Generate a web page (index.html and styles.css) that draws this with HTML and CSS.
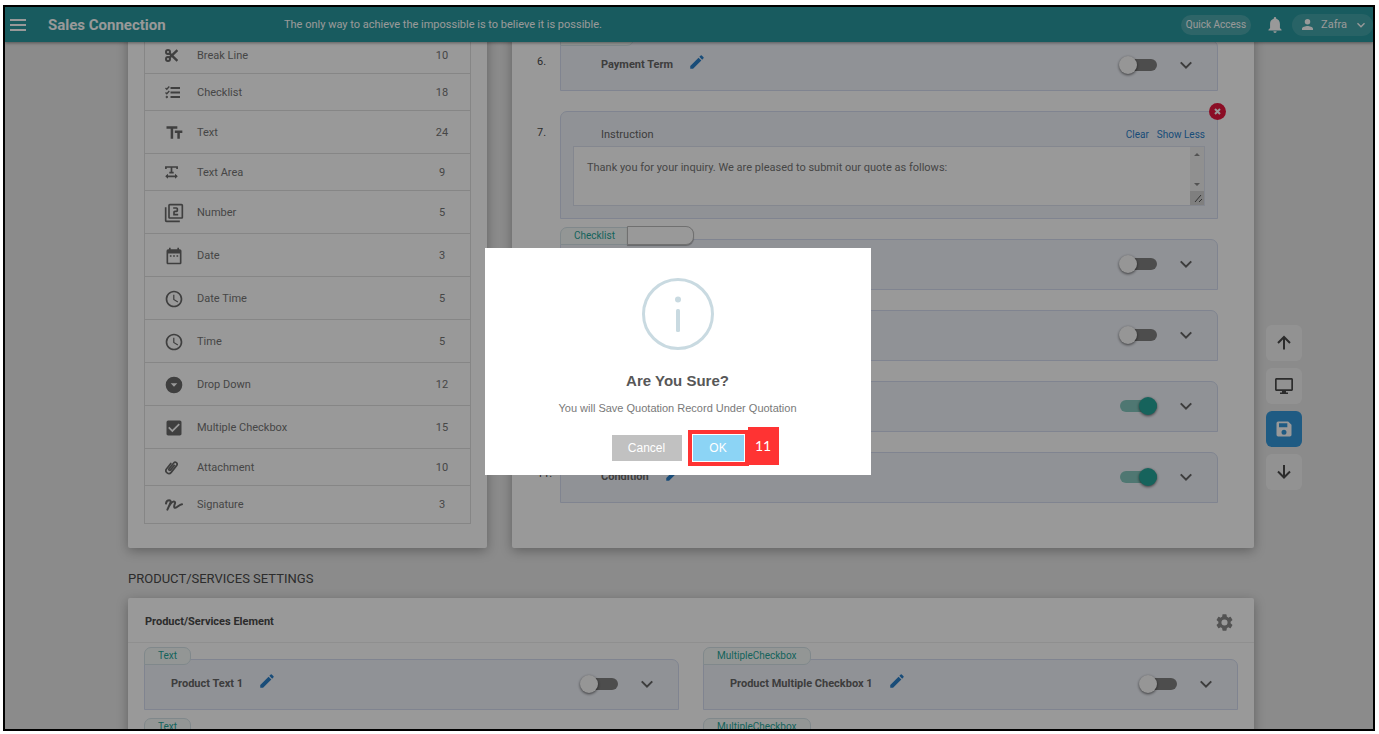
FILE: index.html
```html
<!DOCTYPE html>
<html lang="en">
<head>
<meta charset="utf-8">
<title>Sales Connection</title>
<link rel="stylesheet" href="styles.css">
</head>
<body>
<svg class="sprite" aria-hidden="true">
  <symbol id="pencil" viewBox="0 0 24 24"><path d="M3 17.25V21h3.75L17.81 9.94l-3.75-3.75L3 17.25zM20.71 7.04a1 1 0 0 0 0-1.41l-2.34-2.34a1 1 0 0 0-1.41 0l-1.83 1.83 3.75 3.75 1.83-1.83z"/></symbol>
  <symbol id="chevron" viewBox="0 0 24 24"><path d="M5 8.500l7 7 7-7" fill="none" stroke="currentColor" stroke-width="2.800"/></symbol>
  <symbol id="clock" viewBox="0 0 24 24"><path d="M11.99 2C6.47 2 2 6.48 2 12s4.47 10 9.99 10C17.52 22 22 17.52 22 12S17.52 2 11.99 2zM12 20a8 8 0 1 1 0-16 8 8 0 0 1 0 16zm.5-13H11v6l5.25 3.15.75-1.23-4.5-2.67z"/></symbol>
</svg>
<div class="frame">
  <header class="topbar">
    <button class="menu" aria-label="Menu"><svg viewBox="0 0 16 12"><path d="M0 1h16M0 6h16M0 11h16" stroke="currentColor" stroke-width="2"/></svg></button>
    <h1 class="brand">Sales Connection</h1>
    <p class="motto">The only way to achieve the impossible is to believe it is possible.</p>
    <button class="quick">Quick Access</button>
    <button class="bell" aria-label="Notifications"><svg viewBox="4 2.5 16 19.500"><path d="M12 22c1.100 0 2-.9 2-2h-4a2 2 0 0 0 2 2zm6-6v-5c0-3.070-1.640-5.640-4.500-6.320V4a1.500 1.500 0 0 0-3 0v.680C7.630 5.360 6 7.920 6 11v5l-2 2v1h16v-1z"/></svg></button>
    <button class="user"><svg class="person" viewBox="4 4 16 16"><path d="M12 12a4 4 0 1 0 0-8 4 4 0 0 0 0 8zm0 2c-2.670 0-8 1.340-8 4v2h16v-2c0-2.660-5.330-4-8-4z"/></svg><span>Zafra</span><svg class="caret" viewBox="0 0 24 24"><use href="#chevron"/></svg></button>
  </header>

  <main class="page">
    <div class="board">
      <section class="card palette">
        <ul class="elements">
          <li class="short"><span class="slot"><svg class="small" viewBox="0 0 13 13" fill="none" stroke="currentColor" stroke-width="2"><circle cx="3" cy="3" r="2"/><circle cx="3" cy="10" r="2"/><path d="M4.300 8.800 12.400 1.200M4.300 4.200l8.100 7.600" stroke-width="2.400"/></svg></span><span class="name">Break Line</span><span class="count">10</span></li>
          <li class="short"><span class="slot"><svg class="medium" viewBox="0 0 15 13" fill="none" stroke="currentColor"><path d="M5.500 2H15M5.500 6.500H15M5.500 11H15" stroke-width="1.800"/><path d="M.5 2l1.300 1.200L4.300.6M.5 6.500l1.300 1.200 2.500-2.600" stroke-width="1.400"/><circle cx="1.800" cy="11" r=".8" fill="currentColor"/></svg></span><span class="name">Checklist</span><span class="count">18</span></li>
          <li><span class="slot"><svg viewBox="0 0 24 24"><path d="M3 4v3h5v12h3V7h5V4H3zm19 5h-9v3h3v7h3v-7h3V9z"/></svg></span><span class="name">Text</span><span class="count">24</span></li>
          <li class="short"><span class="slot"><svg class="small" viewBox="0 0 13 13" fill="none" stroke="currentColor" stroke-width="1.700"><path d="M.9 3V1h11.200v2M6.500 1v5.500M4.300 6.700h4.400M1.500 10.300h10"/><path d="M3 7.800.2 10.300 3 12.800zM10 7.800l2.800 2.500-2.800 2.500z" fill="currentColor" stroke="none"/></svg></span><span class="name">Text Area</span><span class="count">9</span></li>
          <li><span class="slot"><svg viewBox="0 0 24 24"><path d="M3 5H1v16c0 1.100.9 2 2 2h16v-2H3V5zm18-4H7c-1.100 0-2 .9-2 2v14c0 1.100.9 2 2 2h14c1.100 0 2-.9 2-2V3c0-1.100-.9-2-2-2zm0 16H7V3h14v14zm-4-4h-4v-2h2c1.100 0 2-.9 2-2V7c0-1.100-.9-2-2-2h-4v2h4v2h-2c-1.100 0-2 .9-2 2v4h6v-2z"/></svg></span><span class="name">Number</span><span class="count">5</span></li>
          <li><span class="slot"><svg viewBox="0 0 24 24"><path d="M9 11H7v2h2v-2zm4 0h-2v2h2v-2zm4 0h-2v2h2v-2zm2-7h-1V2h-2v2H8V2H6v2H5a2 2 0 0 0-2 2v14c0 1.100.9 2 2 2h14c1.100 0 2-.9 2-2V6c0-1.100-.9-2-2-2zm0 16H5V9h14v11z"/></svg></span><span class="name">Date</span><span class="count">3</span></li>
          <li><span class="slot"><svg><use href="#clock"/></svg></span><span class="name">Date Time</span><span class="count">5</span></li>
          <li><span class="slot"><svg><use href="#clock"/></svg></span><span class="name">Time</span><span class="count">5</span></li>
          <li><span class="slot"><svg viewBox="0 0 24 24"><path d="M12 2a10 10 0 1 0 0 20 10 10 0 0 0 0-20zm0 12-4-4h8z"/></svg></span><span class="name">Drop Down</span><span class="count">12</span></li>
          <li><span class="slot"><svg viewBox="0 0 24 24"><path d="M19 3H5a2 2 0 0 0-2 2v14c0 1.100.9 2 2 2h14c1.100 0 2-.9 2-2V5c0-1.100-.9-2-2-2zm-9 14-5-5 1.410-1.410L10 14.170l7.590-7.590L19 8z"/></svg></span><span class="name">Multiple Checkbox</span><span class="count">15</span></li>
          <li class="short"><span class="slot"><svg class="clip" viewBox="0 0 13 15" fill="none" stroke="currentColor" stroke-width="1.700" stroke-linecap="round"><path d="M9.300 5.300 5.600 9.900c-.9 1-2.300-.1-1.500-1.200l4.600-5.700c1.600-1.900 4.500.3 3 2.400l-5.500 7C3.800 15.300-.7 12 1.500 8.900L5.800 3.500"/></svg></span><span class="name">Attachment</span><span class="count">10</span></li>
          <li class="short"><span class="slot"><svg class="sign" viewBox="0 0 18 12" fill="none" stroke="currentColor" stroke-width="2" stroke-linecap="round" stroke-linejoin="round"><path d="M1 4.500C1.300 2.300 3 1.200 4.300 1.200c1.700 0 1.500 1.700.9 3.300L2.400 10.600C4 7 6.500 2.800 8.700 2.600c1.800-.1 1.500 1.400 1 2.600-.6 1.600-1 3.700.6 3.600C12.300 8.700 14 5.600 17 5.200"/></svg></span><span class="name">Signature</span><span class="count">3</span></li>
        </ul>
      </section>

      <section class="card fields">
        <div class="line">
          <span class="no">6.</span>
          <div class="box"><span class="tag stub"></span><span class="title">Payment Term</span><button class="edit" aria-label="Edit"><svg><use href="#pencil"/></svg></button><input class="switch" type="checkbox" aria-label="Payment Term"><button class="fold" aria-label="Expand"><svg><use href="#chevron"/></svg></button></div>
        </div>
        <div class="line">
          <span class="no">7.</span>
          <div class="box note">
            <div class="note-head"><label for="instruction">Instruction</label><a href="#">Clear</a><a href="#">Show Less</a></div>
            <div class="note-body">
              <textarea id="instruction">Thank you for your inquiry. We are pleased to submit our quote as follows:</textarea>
              <svg class="scroll" viewBox="0 0 14 58" aria-hidden="true"><path d="M0 0h14v58H0z" fill="#f1f1f1"/><path d="M0 44h14v14H0z" fill="#d4d4d4"/><path d="M4 9l3-3 3 3zM4 36l3 3 3-3z" fill="#8a8a8a"/><path d="M5 55l6-7M9 55l3-3" stroke="#555" fill="none"/></svg>
            </div>
            <button class="remove" aria-label="Remove"><svg viewBox="0 0 17 17"><path d="M6 6l5 5M11 6l-5 5" stroke="#fff" stroke-width="2"/></svg></button>
          </div>
        </div>
        <div class="line">
          <span class="no"></span>
          <div class="box"><span class="tag joined">Checklist</span><input class="tag-input" type="text" aria-label="Checklist name"><span class="title"></span><input class="switch" type="checkbox" aria-label="Checklist"><button class="fold" aria-label="Expand"><svg><use href="#chevron"/></svg></button></div>
        </div>
        <div class="line">
          <span class="no"></span>
          <div class="box"><span class="title"></span><input class="switch" type="checkbox" aria-label="Enable"><button class="fold" aria-label="Expand"><svg><use href="#chevron"/></svg></button></div>
        </div>
        <div class="line">
          <span class="no"></span>
          <div class="box"><span class="title"></span><input class="switch" type="checkbox" checked aria-label="Enable"><button class="fold" aria-label="Expand"><svg><use href="#chevron"/></svg></button></div>
        </div>
        <div class="line">
          <span class="no">11.</span>
          <div class="box"><span class="title">Condition</span><button class="edit" aria-label="Edit"><svg><use href="#pencil"/></svg></button><input class="switch" type="checkbox" checked aria-label="Condition"><button class="fold" aria-label="Expand"><svg><use href="#chevron"/></svg></button></div>
        </div>
      </section>
    </div>

    <h2 class="heading">PRODUCT/SERVICES SETTINGS</h2>
    <section class="card products">
      <div class="products-head"><h3>Product/Services Element</h3><button class="gear" aria-label="Settings"><svg viewBox="2 2 20 20"><path d="M19.140 12.940c.04-.3.060-.610.060-.940s-.020-.640-.070-.940l2.030-1.580a.49.49 0 0 0 .120-.610l-1.920-3.320a.49.49 0 0 0-.590-.220l-2.390.960a7 7 0 0 0-1.620-.940l-.360-2.540A.48.48 0 0 0 13.920 2.400h-3.840c-.240 0-.430.170-.470.410l-.360 2.540c-.590.240-1.130.570-1.620.940l-2.390-.960a.48.48 0 0 0-.590.220L2.740 8.870a.47.47 0 0 0 .120.610l2.030 1.580c-.050.3-.090.630-.090.940s.020.640.070.940l-2.030 1.580a.49.49 0 0 0-.120.610l1.920 3.320c.120.220.370.290.590.220l2.390-.960c.5.380 1.030.7 1.620.940l.360 2.540c.050.240.240.410.480.410h3.840c.240 0 .440-.170.470-.410l.360-2.540a7 7 0 0 0 1.620-.940l2.390.960c.220.080.470 0 .590-.220l1.920-3.320a.47.47 0 0 0-.120-.610zM12 15.600a3.600 3.600 0 1 1 0-7.200 3.600 3.600 0 0 1 0 7.200z"/></svg></button></div>
      <div class="product-grid">
        <div class="box"><span class="tag">Text</span><span class="title">Product Text 1</span><button class="edit" aria-label="Edit"><svg><use href="#pencil"/></svg></button><input class="switch" type="checkbox" aria-label="Product Text 1"><button class="fold" aria-label="Expand"><svg><use href="#chevron"/></svg></button></div>
        <div class="box"><span class="tag">MultipleCheckbox</span><span class="title">Product Multiple Checkbox 1</span><button class="edit" aria-label="Edit"><svg><use href="#pencil"/></svg></button><input class="switch" type="checkbox" aria-label="Product Multiple Checkbox 1"><button class="fold" aria-label="Expand"><svg><use href="#chevron"/></svg></button></div>
        <div class="box"><span class="tag">Text</span></div>
        <div class="box"><span class="tag">MultipleCheckbox</span></div>
      </div>
    </section>
  </main>

  <nav class="tools" aria-label="Page tools">
    <button aria-label="Up"><svg viewBox="0 0 20 20" fill="none" stroke="currentColor" stroke-width="2"><path d="M10 16.500V4M4 10l6-6 6 6"/></svg></button>
    <button aria-label="Preview"><svg viewBox="0 0 20 20"><path d="M2.500 2h15c.8 0 1.500.7 1.500 1.500v10c0 .8-.7 1.500-1.500 1.500H12v1.500h2V18H6v-1.500h2V15H2.500c-.8 0-1.500-.7-1.500-1.500v-10C1 2.700 1.700 2 2.500 2zm.2 1.700v9.600h14.600V3.700z"/></svg></button>
    <button class="save" aria-label="Save"><svg viewBox="0 0 24 24"><path d="M17 3H5a2 2 0 0 0-2 2v14a2 2 0 0 0 2 2h14c1.100 0 2-.9 2-2V7zm-5 16a3 3 0 1 1 0-6 3 3 0 0 1 0 6zm4-9H6V5h10z"/></svg></button>
    <button aria-label="Down"><svg viewBox="0 0 20 20" fill="none" stroke="currentColor" stroke-width="2"><path d="M10 3v12.500M4 9.500l6 6 6-6"/></svg></button>
  </nav>

  <div class="overlay">
    <div class="dialog" role="dialog" aria-labelledby="ask">
      <div class="info"><svg viewBox="0 0 72 72"><circle cx="36" cy="36" r="34.500" fill="none" stroke="#c9dae1" stroke-width="3"/><circle cx="36" cy="21.500" r="3" fill="#c9dae1"/><rect x="34" y="31" width="4" height="23" rx="1.500" fill="#c9dae1"/></svg></div>
      <h2 id="ask">Are You Sure?</h2>
      <p>You will Save Quotation Record Under Quotation</p>
      <div class="actions"><button class="cancel">Cancel</button><div class="ok-wrap"><button class="ok">OK</button><span class="step">11</span></div></div>
    </div>
  </div>
</div>
</body>
</html>
```
FILE: styles.css
```css
* { box-sizing: border-box; }
body {
  margin: 0;
  height: 100vh;
  padding: 5px 4px 3px 3px;
  display: flex;
  background: #fff;
  color: #4a4a4a;
  font: 11px/16px Roboto, "Liberation Sans", sans-serif;
}
h1, h2, h3, p, ul { margin: 0; padding: 0; }
button { margin: 0; padding: 0; border: 0; background: none; font: inherit; color: inherit; }
svg { display: block; }
svg:not([fill]) { fill: currentColor; }
input, textarea { font: inherit; margin: 0; }
.sprite { position: absolute; width: 0; height: 0; }

.frame {
  position: relative;
  flex: 1;
  display: flex;
  flex-direction: column;
  border: 2px solid #000;
  background: #e8e8e8;
  overflow: hidden;
}

.topbar {
  position: relative;
  z-index: 1;
  flex: none;
  display: flex;
  align-items: center;
  height: 35px;
  padding-left: 5px;
  background: #28989e;
  color: #fff;
  box-shadow: 0 1px 3px rgba(0, 0, 0, .4);
}
.menu svg { width: 16px; height: 12px; }
.brand { width: 236px; margin-left: 22px; font-size: 15px; font-weight: 700; }
.motto { flex: 1; }
.quick { height: 20px; padding: 0 5px; border-radius: 10px; background: #4da9ae; font-size: 10px; }
.bell { margin: 0 10px 0 17px; }
.bell svg { width: 14px; height: 16px; }
.user { display: flex; align-items: center; height: 22px; padding: 0 6px 0 10px; border-radius: 11px; background: #44a5aa; }
.person { width: 11px; height: 11px; }
.user span { margin: 0 8px; }
.caret { width: 12px; height: 12px; }

.page { flex: 1; min-height: 0; padding: 0 119px 0 123px; }
.card { background: #fff; border-radius: 2px; box-shadow: 0 3px 12px rgba(0, 0, 0, .3); }
.board { display: grid; grid-template-columns: 359fr 742fr; gap: 25px; margin-top: -22px; }

.palette { padding: 17px 16px 24px; }
.elements { border: 1px solid #e0e0e0; border-top: 0; list-style: none; }
.elements li { display: flex; align-items: center; height: 43px; padding: 1px 8px 0 19px; border-bottom: 1px solid #e0e0e0; color: #757575; }
.elements li:last-child { border-bottom: 0; }
.elements .short { height: 37px; }
.slot { width: 20px; margin-right: 13px; color: #6a6a6a; }
.slot svg { width: 20px; height: 20px; }
.slot .small { width: 13px; height: 13px; margin-left: 1px; }
.slot .medium { width: 15px; height: 13px; margin-left: 1px; }
.slot .clip { width: 13px; height: 15px; margin-left: 1px; }
.slot .sign { width: 18px; height: 12px; margin-left: 1px; }
.name { flex: 1; }
.count { width: 40px; text-align: center; }

.fields { display: flex; flex-direction: column; gap: 20px; padding: 20px 36px 44px 25px; }
.line { display: grid; grid-template-columns: 23px 1fr; }
.no { padding-top: 14px; }
.box {
  position: relative;
  display: flex;
  align-items: center;
  height: 51px;
  padding: 0 22px 1px 40px;
  border: 1px solid #d5ddf0;
  border-radius: 0 7px 0 0;
  background: #f1f4fb;
}
.title { font-weight: 700; color: #666; }
.edit { margin: 0 auto 6px 15px; color: #2a7fc9; }
.edit svg { width: 18px; height: 18px; }
.title:empty { flex: 1; }
.switch {
  appearance: none;
  position: relative;
  width: 37px;
  height: 12px;
  margin-right: 20px;
  border-radius: 6px;
  background: #818181;
}
.switch::before {
  content: "";
  position: absolute;
  left: -1px;
  top: -3px;
  width: 18px;
  height: 18px;
  border-radius: 50%;
  background: #fafafa;
  box-shadow: 0 1px 3px rgba(0, 0, 0, .6);
}
.switch:checked { background: #84c7be; }
.switch:checked::before { left: 19px; background: #26a69a; }
.fold { color: #666; }
.fold svg { width: 18px; height: 18px; }

.tag {
  position: absolute;
  left: -1px;
  top: -13px;
  height: 18px;
  padding: 0 13px;
  border: 1px solid #d5e3e8;
  border-radius: 7px 7px 7px 0;
  background: #f5fbf8;
  color: #26a69a;
  font-size: 10px;
}
.stub { width: 74px; }
.joined { width: 68px; border-radius: 7px 0 0 0; }
.tag-input { position: absolute; left: 66px; top: -14px; width: 67px; height: 19px; border: 1px solid #bbb; border-radius: 0 8px 8px 0; background: #fff; box-shadow: 0 1px 1px rgba(0, 0, 0, .3); }

.note { flex-direction: column; align-items: stretch; height: 108px; padding: 0 12px; border-radius: 7px 7px 0 0; }
.note-head { display: flex; gap: 8px; padding: 15px 0 3px 28px; color: #666; }
.note-head label { flex: 1; }
.note-head a { color: #2a7fc9; font-size: 10px; text-decoration: none; }
.note-body { position: relative; height: 60px; }
.note textarea { display: block; width: 100%; height: 100%; padding: 13px; border: 1px solid #dde2ee; background: #fff; color: #757575; resize: none; overflow: hidden; }
.scroll { position: absolute; right: 1px; top: 1px; width: 14px; height: 58px; }
.remove { position: absolute; right: -9px; top: -9px; width: 17px; height: 17px; border-radius: 50%; background: #e8173f; }

.heading { padding: 22px 0 11px; font-size: 13px; font-weight: 400; line-height: 17px; }
.products-head { display: flex; align-items: center; justify-content: space-between; height: 45px; padding: 4px 21px 0 17px; border-bottom: 1px solid #efefef; }
.products-head h3 { font-size: 11px; font-weight: 700; }
.gear { color: #8a8a8a; }
.gear svg { width: 17px; height: 17px; }
.product-grid { display: grid; grid-template-columns: 1fr 1fr; gap: 20px 24px; padding: 16px 16px 20px; }
.product-grid .box { padding-left: 26px; }

.tools { position: absolute; right: 71px; top: 318px; display: flex; flex-direction: column; gap: 7px; }
.tools button { display: grid; place-items: center; width: 36px; height: 36px; border-radius: 6px; background: #f4f4f4; }
.tools svg { width: 20px; height: 20px; }
.tools .save { background: #3498db; color: #fff; }

.overlay { position: absolute; z-index: 2; inset: 0; display: grid; place-content: center; padding: 0 23px 13px 0; background: rgba(0, 0, 0, .4); }
.dialog { width: 386px; padding: 30px 20px 14px; background: #fff; font-family: "Liberation Sans", sans-serif; text-align: center; }
.info svg { width: 72px; height: 72px; margin: 0 auto; }
.dialog h2 { margin-top: 22px; font-size: 15px; line-height: 18px; color: #575757; }
.dialog p { margin: 10px 0 19px; font-size: 11px; color: #797979; }
.actions { display: flex; justify-content: center; gap: 11px; font-size: 12px; }
.actions button { height: 26px; color: #fff; }
.cancel { width: 70px; background: #c1c1c1; }
.ok-wrap { position: relative; }
.ok { width: 51px; background: #8cd4f5; outline: 4px solid #f33; outline-offset: 1px; }
.step { position: absolute; left: 55px; top: -8px; width: 31px; height: 38px; background: #f33; color: #fff; font: 14px/38px Lato, sans-serif; }
```
